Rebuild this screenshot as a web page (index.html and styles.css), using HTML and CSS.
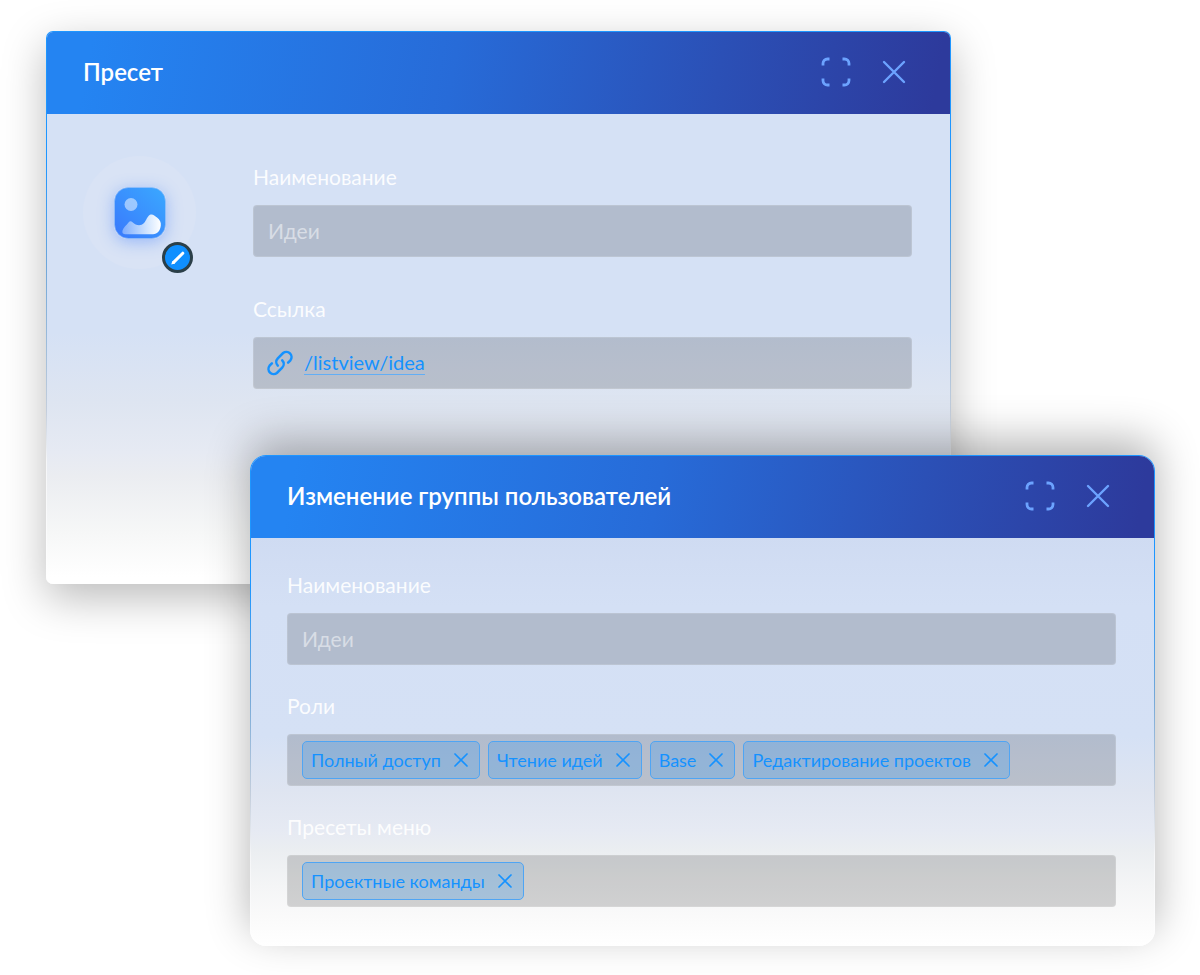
FILE: index.html
```html
<!DOCTYPE html>
<html lang="ru">
<head>
<meta charset="utf-8">
<meta name="viewport" content="width=device-width, initial-scale=1">
<title>Пресет</title>
<link rel="stylesheet" href="styles.css">
</head>
<body>
<svg class="sprite" aria-hidden="true">
  <symbol id="icon-expand" viewBox="0 0 30 30">
    <path d="M2 8.500V6.500a4.500 4.500 0 0 1 4.500-4.500H8.500M21.500 2h2A4.500 4.500 0 0 1 28 6.500v2M28 21.500v2a4.500 4.500 0 0 1-4.500 4.500h-2M8.500 28H6.500A4.500 4.500 0 0 1 2 23.500v-2" fill="none" stroke="currentColor" stroke-width="2.800"/>
  </symbol>
  <symbol id="icon-close" viewBox="0 0 24 24">
    <path d="M2 2l20 20M22 2L2 22" fill="none" stroke="currentColor" stroke-width="2.400" stroke-linecap="round"/>
  </symbol>
  <symbol id="icon-remove" viewBox="0 0 14 14">
    <path d="M1 1l12 12M13 1L1 13" fill="none" stroke="currentColor" stroke-width="1.700" stroke-linecap="round"/>
  </symbol>
</svg>

<main class="stage">
  <section class="dialog" aria-labelledby="preset-title">
    <header class="dialog-header">
      <h2 class="dialog-title" id="preset-title">Пресет</h2>
      <div class="dialog-actions">
        <button class="icon-button" type="button" aria-label="Развернуть"><svg width="30" height="30"><use href="#icon-expand"/></svg></button>
        <button class="icon-button" type="button" aria-label="Закрыть"><svg width="24" height="24"><use href="#icon-close"/></svg></button>
      </div>
    </header>
    <div class="dialog-body preset-body">
      <div class="avatar">
        <svg class="avatar-image" width="52" height="52" viewBox="0 0 52 52" aria-hidden="true">
          <defs>
            <linearGradient id="tile" x1="0" y1="1" x2="1" y2="0">
              <stop offset="0" stop-color="#3a78fc"/>
              <stop offset="1" stop-color="#3aa9ff"/>
            </linearGradient>
            <linearGradient id="hill" x1="0" y1="0" x2="1" y2="0">
              <stop offset="0" stop-color="#fff" stop-opacity=".35"/>
              <stop offset="1" stop-color="#fff"/>
            </linearGradient>
          </defs>
          <rect x=".5" y=".5" width="51" height="51" rx="14" fill="url(#tile)" stroke="#8fbcfa" stroke-opacity=".7"/>
          <circle cx="17" cy="17.500" r="6.500" fill="#fff" fill-opacity=".5"/>
          <path d="M8.500 43.500C9.500 40.500 12.500 38 14.500 35.500C15.800 34 17 34 18.500 35.200C22 38.500 26.500 39.500 30 36C32.500 33.500 33 29.500 36 27.800C38.500 26.500 40.500 28.500 43 30.500C46 33 47.200 35 46.800 38.500C46.300 43.500 43.500 47.200 39 47.300H11.500C9 47.300 7.800 46 8.500 43.500Z" fill="url(#hill)"/>
        </svg>
        <button class="avatar-edit" type="button" aria-label="Изменить изображение">
          <svg width="16" height="16" viewBox="0 0 16 16"><path d="M3.600 12.400L12.800 3.200" stroke="#fff" stroke-width="3" stroke-linecap="round"/><path d="M1.200 14.600l1.200-3.600 2.600 2.400z" fill="#fff"/></svg>
        </button>
      </div>
      <div class="fields preset-fields">
        <div class="field">
          <label class="label" for="preset-name">Наименование</label>
          <input class="control" id="preset-name" type="text" value="Идеи">
        </div>
        <div class="field">
          <span class="label" id="link-label">Ссылка</span>
          <div class="control link-control" role="group" aria-labelledby="link-label">
            <svg width="26" height="26" viewBox="0 0 26 26" fill="none" stroke="currentColor" stroke-width="2.500" stroke-linecap="round" aria-hidden="true">
              <path d="M10.800 15.600a5.200 5.200 0 0 1 0-7.300l5.300-5.300a5.200 5.200 0 0 1 7.300 7.300l-2.300 2.300"/>
              <path d="M15.200 10.400a5.200 5.200 0 0 1 0 7.300l-5.300 5.300a5.200 5.200 0 0 1-7.300-7.300l2.300-2.300"/>
            </svg>
            <a class="link" href="#">/listview/idea</a>
          </div>
        </div>
      </div>
    </div>
  </section>

  <section class="dialog dialog-front" aria-labelledby="group-title">
    <header class="dialog-header">
      <h2 class="dialog-title" id="group-title">Изменение группы пользователей</h2>
      <div class="dialog-actions">
        <button class="icon-button" type="button" aria-label="Развернуть"><svg width="30" height="30"><use href="#icon-expand"/></svg></button>
        <button class="icon-button" type="button" aria-label="Закрыть"><svg width="24" height="24"><use href="#icon-close"/></svg></button>
      </div>
    </header>
    <div class="dialog-body fields group-fields">
      <div class="field">
        <label class="label" for="group-name">Наименование</label>
        <input class="control" id="group-name" type="text" value="Идеи">
      </div>
      <div class="field">
        <span class="label" id="roles-label">Роли</span>
        <div class="control tags" role="group" aria-labelledby="roles-label">
          <span class="tag">Полный доступ<button class="tag-remove" type="button" aria-label="Удалить Полный доступ"><svg width="14" height="14"><use href="#icon-remove"/></svg></button></span>
          <span class="tag">Чтение идей<button class="tag-remove" type="button" aria-label="Удалить Чтение идей"><svg width="14" height="14"><use href="#icon-remove"/></svg></button></span>
          <span class="tag">Base<button class="tag-remove" type="button" aria-label="Удалить Base"><svg width="14" height="14"><use href="#icon-remove"/></svg></button></span>
          <span class="tag">Редактирование проектов<button class="tag-remove" type="button" aria-label="Удалить Редактирование проектов"><svg width="14" height="14"><use href="#icon-remove"/></svg></button></span>
        </div>
      </div>
      <div class="field">
        <span class="label" id="presets-label">Пресеты меню</span>
        <div class="control tags" role="group" aria-labelledby="presets-label">
          <span class="tag">Проектные команды<button class="tag-remove" type="button" aria-label="Удалить Проектные команды"><svg width="14" height="14"><use href="#icon-remove"/></svg></button></span>
        </div>
      </div>
    </div>
  </section>
</main>
</body>
</html>
```

FILE: styles.css
```css
*,
*::before,
*::after {
  box-sizing: border-box;
}

body {
  margin: 0;
  background: #fff;
  color: #fff;
  font-family: Lato, "Noto Sans", sans-serif;
  font-size: 21px;
  line-height: 28px;
}

button {
  padding: 0;
  border: 0;
  background: none;
  color: inherit;
  cursor: pointer;
}

svg {
  display: block;
}

.sprite {
  position: absolute;
  width: 0;
  height: 0;
}

/* Two overlapping dialogs */
.stage {
  padding: 31px 45px 29px 46px;
}

.dialog {
  width: 81.6%;
  border: 1px solid transparent;
  border-radius: 7px;
  background:
    linear-gradient(#d5e1f5 0, #d5e1f5 300px, #dee5f1 370px, #e6eaf3 420px, #ebedf1 445px, #f6f7f7 500px, #fff 545px) padding-box,
    linear-gradient(#1e96ff 0, #1e96ff 130px, #74a8d8 240px, #c4cedc 380px, #f5f6f8 430px, #fff 100%) border-box;
  box-shadow: 0 14px 44px rgba(0, 0, 0, .27);
}

.dialog-front {
  position: relative;
  margin-top: -129px;
  margin-left: auto;
  border-radius: 16px;
  background:
    linear-gradient(#cfdbf2 80px, #d4e0f5 150px, #d5e1f5 280px, #dfe5f1 335px, #e6eaf3 375px, #ebeef1 395px, #f4f5f6 430px, #fafafa 460px, #fff 490px) padding-box,
    linear-gradient(#1e96ff 0, #1e96ff 130px, #74a8d8 240px, #c4cedc 340px, #f5f6f8 400px, #fff 100%) border-box;
  box-shadow: 0 -14px 44px rgba(0, 0, 0, .3);
}

.dialog-header {
  display: flex;
  align-items: center;
  justify-content: space-between;
  height: 82px;
  padding: 0 44px 3px 36px;
  border-radius: 6px 6px 0 0;
  background: linear-gradient(100deg, #2484f2 5%, #276bd8 45%, #2b50b6 74%, #2d3a9c 98%);
}

.dialog-front .dialog-header {
  border-radius: 15px 15px 0 0;
}

.dialog-title {
  margin: 0;
  font-size: 24px;
  font-weight: 600;
}

.dialog-actions {
  display: flex;
  align-items: center;
  gap: 31px;
  color: #6ca3ff;
}

.preset-body {
  display: flex;
  align-items: flex-start;
  gap: 57px;
  min-height: 469px;
  padding: 42px 38px 40px 36px;
}

.avatar {
  position: relative;
  display: grid;
  place-items: center;
  flex: none;
  width: 113px;
  height: 113px;
  border-radius: 50%;
  background: #d9e3f5;
}

.avatar-image {
  border-radius: 14px;
  box-shadow: 0 3px 16px rgba(58, 120, 252, .4);
}

.avatar-edit {
  position: absolute;
  right: 3px;
  bottom: -4px;
  display: grid;
  place-items: center;
  width: 31px;
  height: 31px;
  border: 3px solid #2b3f48;
  border-radius: 50%;
  background: #0f8fff;
}

.fields {
  display: flex;
  flex-direction: column;
  gap: 27px;
}

.preset-fields {
  flex: 1;
  gap: 38px;
  padding-top: 7px;
}

.group-fields {
  padding: 33px 38px 38px 36px;
}

.field {
  display: flex;
  flex-direction: column;
  gap: 14px;
}

.label {
  color: rgba(255, 255, 255, .92);
}

.control {
  width: 100%;
  min-height: 52px;
  padding: 0 14px;
  border: 1px solid rgba(255, 255, 255, .12);
  border-radius: 4px;
  background: rgba(0, 0, 0, .16);
  color: rgba(255, 255, 255, .5);
  font: inherit;
}

.link-control {
  display: flex;
  align-items: center;
  gap: 11px;
  padding: 0 13px;
  color: #1592ff;
}

.link {
  border-bottom: 1px solid #62aef5;
  color: inherit;
  font-size: 20px;
  line-height: 23px;
  text-decoration: none;
}

.tags {
  display: flex;
  flex-wrap: wrap;
  align-items: center;
  gap: 8px;
  padding: 6px 14px;
}

.tag {
  display: flex;
  align-items: center;
  gap: 13px;
  height: 38px;
  padding: 0 11px 0 8px;
  border: 1px solid #4fa5f4;
  border-radius: 5px;
  background: rgba(21, 146, 255, .22);
  color: #1592ff;
  font-size: 18px;
}
```
